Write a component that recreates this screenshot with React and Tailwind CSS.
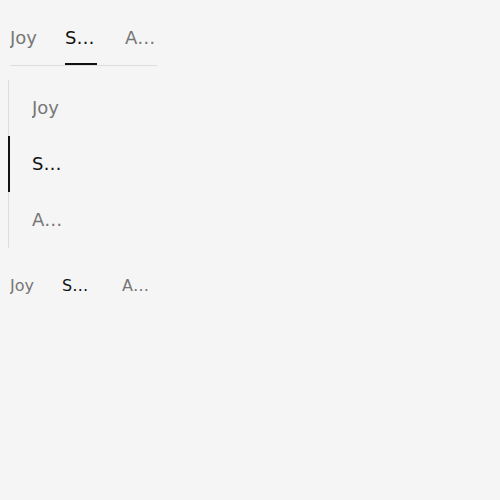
export default function App() {
  const tabs = ["Joy", "Sadness", "Anger"];
  const active = 1;
  return (
    <div
      className="min-h-[500px] w-[500px] bg-[#f5f5f5] pt-[10px]"
      style={{ fontFamily: '"DejaVu Sans", sans-serif' }}
    >
      {/* Horizontal tabs */}
      <div className="ml-[10px] flex w-[147px] gap-[28px] border-b border-[#dddddd]">
        {tabs.map((t, i) => (
          <div
            key={t}
            className={
              "relative flex h-[55px] max-w-[32px] items-center text-[18px] " +
              (i === active ? "text-[#111111]" : "text-[#777777]")
            }
          >
            <span className="block overflow-hidden text-ellipsis whitespace-nowrap">{t}</span>
            {i === active && (
              <span className="absolute bottom-0 left-0 h-[2px] w-full bg-[#111111]" />
            )}
          </div>
        ))}
      </div>

      {/* Vertical tabs */}
      <div className="ml-[8px] mt-[14px] flex w-[80px] flex-col border-l border-[#dddddd]">
        {tabs.map((t, i) => (
          <div
            key={t}
            className={
              "relative flex h-[56px] items-center pb-[2px] pl-[23px] text-[18px] " +
              (i === active ? "text-[#111111]" : "text-[#777777]")
            }
          >
            <span className="block max-w-[32px] overflow-hidden text-ellipsis whitespace-nowrap">{t}</span>
            {i === active && (
              <span className="absolute left-[-1px] top-0 h-full w-[2px] bg-[#111111]" />
            )}
          </div>
        ))}
      </div>

      {/* Small tabs */}
      <div className="ml-[10px] mt-[18px] flex gap-[28px]">
        {tabs.map((t, i) => (
          <div
            key={t}
            className={
              "flex h-[40px] max-w-[32px] items-center text-[16px] " +
              (i === active ? "text-[#111111]" : "text-[#777777]")
            }
          >
            <span className="block overflow-hidden text-ellipsis whitespace-nowrap">{t}</span>
          </div>
        ))}
      </div>
    </div>
  );
}
